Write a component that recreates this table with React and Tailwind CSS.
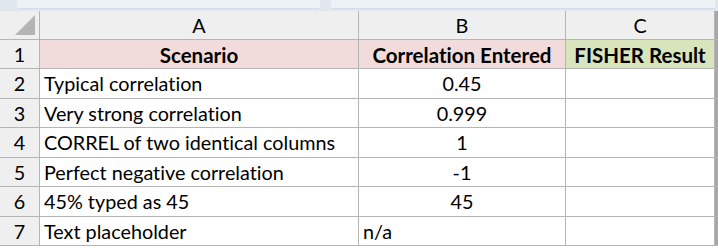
import React from 'react';

const rows = [
    { n: 2, a: 'Typical correlation', b: '0.45' },
    { n: 3, a: 'Very strong correlation', b: '0.999' },
    { n: 4, a: 'CORREL of two identical columns', b: '1' },
    { n: 5, a: 'Perfect negative correlation', b: '-1' },
    { n: 6, a: '45% typed as 45', b: '45' },
    { n: 7, a: 'Text placeholder', b: 'n/a', left: true },
];

const App = () => {
    return (
        <div className="w-[718px] h-[248px] overflow-hidden bg-white text-black text-[19.8px] leading-none [font-variant-ligatures:none]" style={{ fontFamily: 'Lato, "Open Sans", sans-serif' }}>
            {/* formula bar edge */}
            <div className="flex h-[11px] bg-[#e2e7ee]">
                <div className="w-[17px]" />
                <div className="w-[303px] h-[9px] bg-[#eef1f6] rounded-bl-[3px] rounded-br-[3px] border-b border-[#d6dce5]" />
                <div className="w-[11px]" />
                <div className="w-[384px] h-[9px] bg-[#eef1f6] rounded-bl-[3px] border-b border-[#d6dce5]" />
            </div>

            {/* column headers */}
            <div className="flex h-[29px] bg-[#efefef] border-b border-[#b5b5b5]">
                <div className="relative w-[40px] border-r border-[#b5b5b5]">
                    <svg className="absolute right-[4px] bottom-[4px]" width="20" height="20" viewBox="0 0 20 20">
                        <polygon points="20,0 20,20 0,20" fill="#b4b4b4" />
                    </svg>
                </div>
                <div className="w-[319px] flex items-center justify-center pt-[2px] border-r border-[#b5b5b5]">A</div>
                <div className="w-[207px] flex items-center justify-center pt-[2px] border-r border-[#b5b5b5]">B</div>
                <div className="w-[149px] flex items-center justify-center pt-[2px] border-r border-[#b5b5b5]">C</div>
                <div className="flex-1 bg-[#a8a8a8]" />
            </div>

            {/* row 1 */}
            <div className="flex h-[29px] border-b border-[#b5b5b5]">
                <div className="w-[40px] bg-[#efefef] flex items-center justify-center pt-[2px] border-r border-[#b5b5b5]">1</div>
                <div className="w-[319px] bg-[#f2dcdb] flex items-center justify-center pt-[2px] text-[20.5px] font-bold border-r border-[#b5b5b5]">Scenario</div>
                <div className="w-[207px] bg-[#f2dcdb] flex items-center justify-center pt-[2px] text-[20.5px] font-bold border-r border-[#b5b5b5]">Correlation Entered</div>
                <div className="w-[149px] bg-[#d8e4bc] flex items-center justify-center pt-[2px] text-[20.5px] font-bold border-r border-[#b5b5b5]">FISHER Result</div>
                <div className="flex-1 bg-[#a8a8a8]" />
            </div>

            {rows.map((r) => (
                <div key={r.n} className="flex h-[29.5px] border-b border-[#b5b5b5]">
                    <div className="w-[40px] bg-[#efefef] flex items-center justify-center pt-[2px] border-r border-[#b5b5b5]">{r.n}</div>
                    <div className="w-[319px] flex items-center pl-[4px] pt-[2px] border-r border-[#b5b5b5] whitespace-nowrap">{r.a}</div>
                    <div className={`w-[207px] flex items-center pt-[2px] border-r border-[#b5b5b5] ${r.left ? 'pl-[4px]' : 'justify-center'}`}>{r.b}</div>
                    <div className="w-[149px] border-r border-[#b5b5b5]" />
                    <div className="flex-1 bg-[#a8a8a8]" />
                </div>
            ))}
        </div>
    );
};

export default App;
